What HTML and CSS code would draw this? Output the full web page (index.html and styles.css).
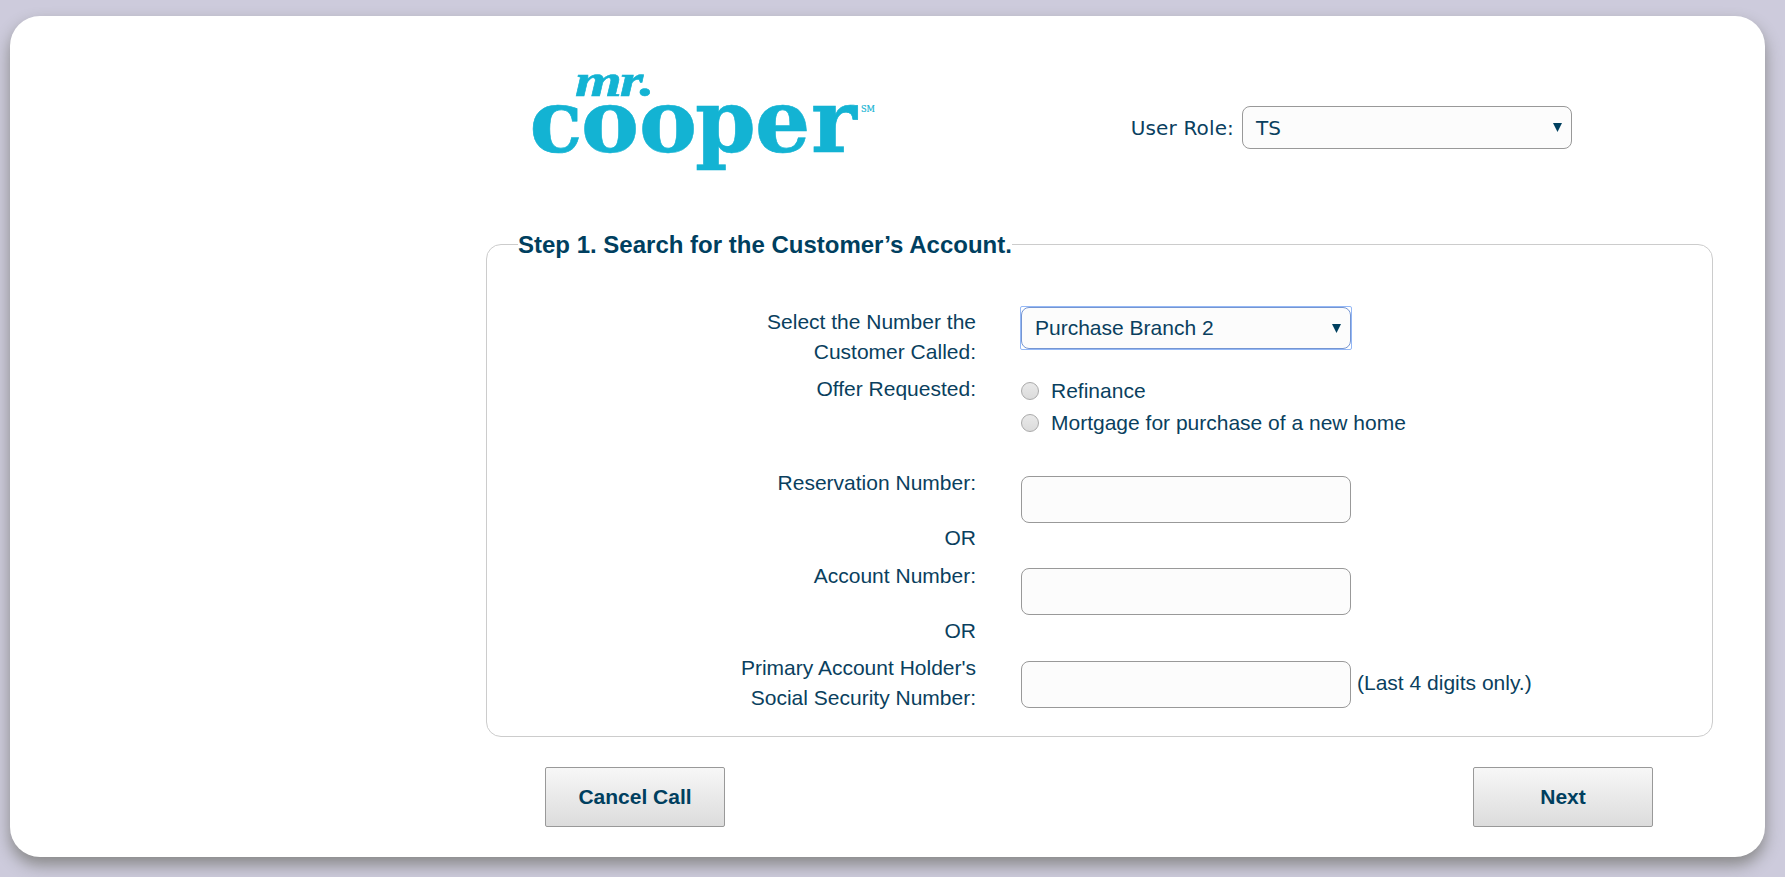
FILE: index.html
```html
<!DOCTYPE html>
<html lang="en">
<head>
<meta charset="utf-8">
<title>Mr. Cooper – Account Search</title>
<link rel="stylesheet" href="styles.css">
</head>
<body>
<main class="card">
  <header class="header">
    <svg class="logo" width="350" height="112" viewBox="0 0 350 112" role="img" aria-label="mr. cooper">
      <text class="logo-mr" transform="translate(43 31.500) scale(1.160 0.880)" y="0" x="0 38.500 55.500">mr.</text>
      <text class="logo-cooper" y="87.500" x="-2.5 49 107 163 223 279">cooper</text>
      <text class="logo-sm" x="329" y="48" textLength="14" lengthAdjust="spacingAndGlyphs">SM</text>
    </svg>
    <div class="role">
      <span class="role-label">User Role:</span>
      <div class="select role-select"><span>TS</span><svg class="arrow" width="9" height="9" viewBox="0 0 9 9"><path d="M0 0h9L4.500 9z"/></svg></div>
    </div>
  </header>
  <section class="panel">
    <h1 class="legend">Step 1. Search for the Customer’s Account.</h1>
    <div class="grid">
      <div class="label">Select the Number the<br>Customer Called:</div>
      <div><div class="focus-ring"><div class="select focused"><span>Purchase Branch 2</span><svg class="arrow" width="9" height="9" viewBox="0 0 9 9"><path d="M0 0h9L4.500 9z"/></svg></div></div></div>
      <div class="label">Offer Requested:</div>
      <div class="radios">
        <label class="option"><span class="radio"></span>Refinance</label>
        <label class="option"><span class="radio"></span>Mortgage for purchase of a new home</label>
      </div>
      <div class="label">Reservation Number:</div>
      <div class="field first"><input class="input" type="text"></div>
      <div class="label">OR</div><div></div>
      <div class="label">Account Number:</div>
      <div class="field"><input class="input" type="text"></div>
      <div class="label">OR</div><div></div>
      <div class="label">Primary Account Holder's<br>Social Security Number:</div>
      <div class="field first"><input class="input" type="text"><span class="hint">(Last 4 digits only.)</span></div>
    </div>
  </section>
  <footer class="actions">
    <button class="button">Cancel Call</button>
    <button class="button">Next</button>
  </footer>
</main>
</body>
</html>
```
FILE: styles.css
```css
* { box-sizing: border-box; }
body {
  margin: 0;
  padding: 16px 20px 20px 10px;
  height: 877px;
  overflow: hidden;
  background: #cdcbdc;
  color: #0a3f5e;
  font: 21px/30px "Liberation Sans", Arial, sans-serif;
}
.card {
  height: 841px;
  padding: 48px 52px 0 476px;
  border-radius: 30px;
  background: #fff;
  box-shadow: 0 8px 16px #888;
}
.header {
  display: flex;
  justify-content: space-between;
  height: 180px;
  padding: 0 141px 0 46px;
}
.logo { overflow: visible; fill: #13b3d3; font-family: "DejaVu Serif", serif; font-weight: bold; }
.logo-mr { font-family: "Liberation Serif", serif; font-size: 52px; font-style: italic; stroke: #13b3d3; stroke-width: 0.6; }
.logo-cooper { font-size: 87px; stroke: #13b3d3; stroke-width: 0.6; }
.logo-sm { font-size: 8.5px; font-weight: normal; stroke: #13b3d3; stroke-width: 0.2; }
.role { display: flex; align-items: center; height: 43px; margin-top: 42px; font-family: "DejaVu Sans", sans-serif; font-size: 20px; }
.role-label { margin-right: 8px; color: #0a4060; letter-spacing: 0.15px; }
.select {
  display: flex;
  align-items: center;
  justify-content: space-between;
  width: 330px;
  height: 43px;
  padding: 0 9px 0 13px;
  border: 1px solid #999;
  border-radius: 8px;
  background: #fcfcfc;
}
.arrow { fill: #00405f; }
.focus-ring {
  width: 332px;
  height: 44px;
  margin: -1px;
  border: 1px solid #94b8f6;
  border-radius: 2px;
}
.focused { height: 42px; border-color: #7595d2; }
.panel {
  height: 493px;
  border: 1px solid #ccc;
  border-radius: 15px;
}
.legend {
  width: max-content;
  margin: -15px 0 0 31px;
  background: #fff;
  color: #003f5f;
  font-size: 24px;
  line-height: 30px;
}
.grid {
  display: grid;
  grid-template-columns: 489px 1fr;
  grid-template-rows: 67px 94px 55px 38px 55px 37px 60px;
  column-gap: 45px;
  padding-top: 47px;
}
.label { text-align: right; }
.radios { padding-top: 1px; }
.option { display: flex; align-items: center; height: 32px; gap: 12px; }
.radio {
  width: 18px;
  height: 18px;
  border: 1px solid #aaa;
  border-radius: 50%;
  background: linear-gradient(#e9e9e9, #dbdbdb);
}
.field { display: flex; align-items: center; height: 47px; margin-top: 7px; }
.first { margin-top: 8px; }
.input {
  width: 330px;
  height: 47px;
  border: 1px solid #999;
  border-radius: 8px;
  background: #fcfcfc;
  font: inherit;
}
.hint { margin-left: 6px; padding-bottom: 3px; }
.actions { display: flex; justify-content: space-between; padding: 30px 60px 0 59px; }
.button {
  width: 180px;
  height: 60px;
  padding: 0;
  border: 1px solid #999;
  border-radius: 2px;
  background: linear-gradient(#f7f7f7, #dcdcdc);
  color: #003f5f;
  font: bold 21px "Liberation Sans", Arial, sans-serif;
}
```
